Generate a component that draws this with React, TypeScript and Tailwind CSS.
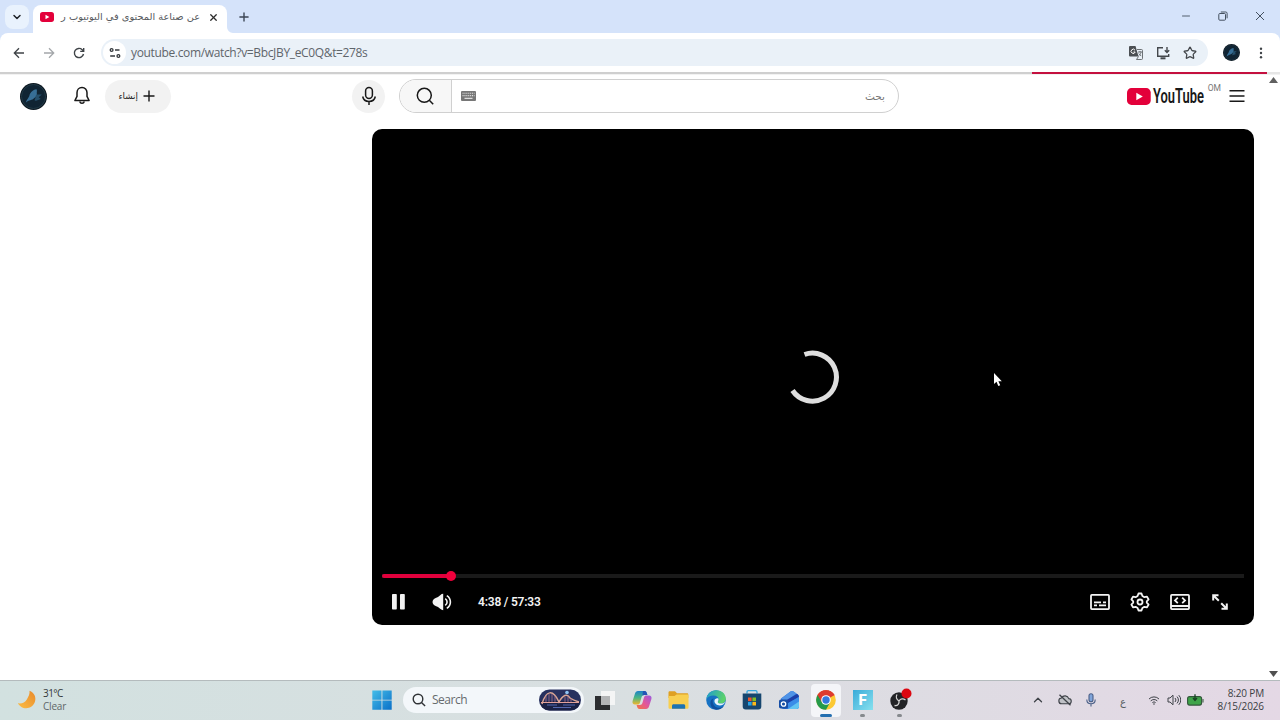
import type { ReactNode } from "react";
import { clsx } from "clsx";
import { ChevronDown, ChevronUp, Plus, X, Minus, Star } from "lucide-react";

interface SlotProps {
    className?: string;
    children: ReactNode;
}

function Slot({ className, children }: SlotProps) {
    return <div className={clsx("flex shrink-0 items-center justify-center", className)}>{children}</div>;
}

function YouTubeBadge({ className }: { className: string }) {
    return (
        <svg viewBox="0 0 24 17" className={className}>
            <rect width="24" height="17" rx="4.5" fill="#e3003a" />
            <path d="M9.4 4.8v7.4l6.6-3.7z" fill="#fff" />
        </svg>
    );
}

function Avatar({ className }: { className: string }) {
    return (
        <svg viewBox="0 0 26 26" className={className}>
            <circle cx="13" cy="13" r="13" fill="#0c1720" />
            <circle cx="13" cy="13" r="11.6" fill="#102433" stroke="#26404c" strokeWidth=".8" />
            <path d="M5.500 19c.8-3.500 3.500-5 4-8.500 1.500-2.500 4.500-4.500 6.500-4.500.8 1.700-.2 3.500.3 4.500.7 1.700-1.300 2.800-2.500 4-2 2.500-5.500 1.500-8.300 4.500z" fill="#376f97" />
            <path d="M15.500 11l5.500 0-3 2.800 2 1.500-4.500 1.700c-1 .5-2-.5-1-1.500z" fill="#25506d" />
        </svg>
    );
}

/* Tab strip */
function TabStrip() {
    return (
        <div className="flex h-[33px] items-start bg-[#d5e3fa] pt-[5px]">
            <div className="ml-[5px] flex size-6 items-center justify-center rounded-lg bg-[#e9f2fd]">
                <ChevronDown className="size-3 text-[#1f2328]" strokeWidth={3} />
            </div>
            <div className="relative ml-1 flex h-7 w-[194px] items-center rounded-t-lg bg-white pb-[4px] pl-[7px]">
                <YouTubeBadge className="h-[10px] w-[14px]" />
                <div
                    dir="rtl"
                    className="ml-2 w-[138px] font-['DejaVu_Sans',sans-serif] text-[9.8px] leading-4 whitespace-nowrap text-[#55585c]"
                >
                    عن صناعة المحتوى في اليوتيوب ر
                </div>
                <X className="ml-[8px] size-[11px] text-[#2c2c2c]" strokeWidth={2.800} />
                <svg viewBox="0 0 6 6" className="absolute bottom-0 left-full size-1.5">
                    <path d="M0 0a6 6 0 0 0 6 6H0z" fill="#fff" />
                </svg>
            </div>
            <Slot className="h-[23px] w-[34px]">
                <Plus className="size-3.5 text-[#3c4654]" strokeWidth={2.4} />
            </Slot>
            <div className="ml-auto flex h-[22px] pr-[2px] text-[#44505f]">
                <Slot className="w-[37px]">
                    <Minus className="size-3" strokeWidth={1.8} />
                </Slot>
                <Slot className="w-[37px]">
                    <svg viewBox="0 0 10 10" className="size-[10px]" fill="none" stroke="currentColor" strokeWidth="1">
                        <rect x=".8" y="2.500" width="6.700" height="6.700" rx="1" />
                        <path d="M2.800 1h5c.8 0 1.300.5 1.300 1.300v5" />
                    </svg>
                </Slot>
                <Slot className="w-[37px]">
                    <svg viewBox="0 0 10 10" className="size-[10px]" fill="none" stroke="currentColor" strokeWidth="1">
                        <path d="M1 1l8 8M9 1L1 9" />
                    </svg>
                </Slot>
            </div>
        </div>
    );
}

/* Address bar row */
function Toolbar() {
    return (
        <div className="bg-[#d5e3fa]">
            <div className="flex h-[39px] items-center rounded-t-lg bg-white pl-1">
                <Slot className="w-[30px]">
                    <svg viewBox="0 0 12 12" className="size-3" fill="none" stroke="#3f4347" strokeWidth="1.3">
                        <path d="M11 6H1.500M6 1.300L1.300 6 6 10.700" />
                    </svg>
                </Slot>
                <Slot className="w-[30px]">
                    <svg viewBox="0 0 12 12" className="size-3" fill="none" stroke="#a4a7aa" strokeWidth="1.3">
                        <path d="M1 6h9.500M6 1.300L10.700 6 6 10.700" />
                    </svg>
                </Slot>
                <Slot className="w-[30px]">
                    <svg viewBox="0 0 12 12" className="size-3" fill="none" stroke="#3f4347" strokeWidth="1.400">
                        <path d="M10.500 7A4.600 4.600 0 1 1 9.200 2.700L10.400 4" />
                        <path d="M10.700.9v3.500H7.200" />
                    </svg>
                </Slot>
                <div className="ml-[7px] flex h-[27px] w-[1107px] items-center rounded-full bg-[#eaf1f8] pr-[5px] pl-[2px]">
                    <Slot className="size-[23px] rounded-full bg-white">
                        <svg viewBox="0 0 12 12" className="size-3" fill="none" stroke="#33373b" strokeWidth="1.300">
                            <circle cx="2.600" cy="3" r="1.400" />
                            <path d="M6 3h4.500M1.200 9H6" />
                            <circle cx="9.400" cy="9" r="1.400" />
                        </svg>
                    </Slot>
                    <span className="ml-[5px] pt-px font-['Open_Sans',sans-serif] text-[12px] tracking-[-0.35px] text-[#5f656b]">
                        youtube.com/watch?v=BbcJBY_eC0Q&amp;t=278s
                    </span>
                    <div className="ml-auto flex text-[#44484c]">
                        <Slot className="w-[27px]">
                            <svg viewBox="0 0 14 14" className="size-3.5">
                                <path d="M1 0h5.500l3 10.500H1a1 1 0 0 1-1-1V1a1 1 0 0 1 1-1z" fill="#4b4f53" />
                                <path d="M6 4.200A2.100 2.100 0 1 0 6.200 6H4.500" fill="none" stroke="#fff" strokeWidth="1" />
                                <path d="M8 3.500h4.500a1 1 0 0 1 1 1V12.500a1 1 0 0 1-1 1H7.500L9.500 10.500M9 6h4M11 5v1M12 6.300c-.4 1.700-1.400 2.800-2.400 3.500M9.800 7.500l2.400 2.600" fill="none" stroke="#5f6367" strokeWidth=".9" />
                            </svg>
                        </Slot>
                        <Slot className="w-[27px]">
                            <svg viewBox="0 0 14 14" className="size-3.5" fill="none" stroke="currentColor" strokeWidth="1.400">
                                <path d="M7 1.700H1.700v8.600h11V8M11 1v5M8.800 4.200L11 6.400l2.200-2.200" />
                                <path d="M4.500 12.300h5" strokeWidth="2" />
                            </svg>
                        </Slot>
                        <Slot className="w-[27px]">
                            <Star className="size-[14px]" strokeWidth={2.200} />
                        </Slot>
                    </div>
                </div>
                <Slot className="ml-[14px] w-[18px]">
                    <Avatar className="size-[17px]" />
                </Slot>
                <Slot className="ml-[14px] w-[14px]">
                    <svg viewBox="0 0 4 12" className="h-3 w-1" fill="#3f4347">
                        <circle cx="2" cy="1.700" r="1.200" />
                        <circle cx="2" cy="6" r="1.200" />
                        <circle cx="2" cy="10.300" r="1.200" />
                    </svg>
                </Slot>
            </div>
        </div>
    );
}

function Masthead() {
    return (
        <header className="flex h-[42px] items-center">
            <Avatar className="ml-5 size-[27px]" />
            <Slot className="ml-[25px] w-5">
                <svg viewBox="0 0 20 20" className="size-5" fill="none" stroke="#181818" strokeWidth="1.500" strokeLinejoin="round">
                    <path d="M10 1.600c-3 0-5 2.300-5 5.200v3.600L2.900 14.500h14.200L15 10.400V6.800c0-2.900-2-5.200-5-5.200z" />
                    <path d="M7.700 15.500a2.400 2.400 0 0 0 4.600 0" />
                </svg>
            </Slot>
            <div className="ml-[13px] flex h-[33px] w-[66px] items-center rounded-full bg-[#f2f2f2] pl-[13px]">
                <span dir="rtl" className="w-[20px] font-['DejaVu_Sans',sans-serif] text-[8.800px] leading-4 whitespace-nowrap text-[#222]">
                    إنشاء
                </span>
                <svg viewBox="0 0 12 12" className="ml-[5px] size-3" stroke="#181818" strokeWidth="1.400">
                    <path d="M6 .5v11M.5 6h11" />
                </svg>
            </div>
            <Slot className="ml-[181px] size-[33px] rounded-full bg-[#f2f2f2]">
                <svg viewBox="0 0 16 20" className="h-5 w-4" fill="none" stroke="#181818" strokeWidth="1.500">
                    <rect x="4.600" y="1.500" width="6.800" height="11" rx="3.400" />
                    <path d="M1.700 10.500c.6 3.200 3.200 5 6.300 5s5.700-1.800 6.300-5M8 15.500V19" />
                </svg>
            </Slot>
            <div className="ml-[14px] flex h-[34px] w-[500px] items-center overflow-hidden rounded-full border border-[#d0d0d0] bg-white">
                <Slot className="h-full w-[52px] border-r border-[#d0d0d0] bg-[#f7f7f7]">
                    <svg viewBox="0 0 18 18" className="mr-px size-[18px]" fill="none" stroke="#181818" strokeWidth="1.500">
                        <circle cx="8.300" cy="8.300" r="7" />
                        <path d="M13.300 13.300L17.200 17.200" />
                    </svg>
                </Slot>
                <svg viewBox="0 0 15 10" className="ml-[9px] h-[10px] w-[15px]">
                    <rect width="15" height="10" rx="1" fill="#777" />
                    <path d="M1.500 2.300h12M1.500 4.600h12" stroke="#ddd" strokeWidth="1.100" strokeDasharray="1.100 .8" />
                    <path d="M3.500 7.400h8" stroke="#ddd" strokeWidth="1.100" />
                </svg>
                <span dir="rtl" className="mr-[13px] ml-auto font-['DejaVu_Sans',sans-serif] text-[10.500px] leading-4 text-[#777]">
                    بحث
                </span>
            </div>
            <div className="ml-[228px] flex w-[94px] items-center">
                <YouTubeBadge className="h-[17px] w-6" />
                <svg viewBox="0 0 53 24" className="ml-px h-6 w-[53px] overflow-visible">
                    <text
                        x="1"
                        y="19.300"
                        textLength="51"
                        lengthAdjust="spacingAndGlyphs"
                        fontFamily="Roboto, sans-serif"
                        fontSize="19.500"
                        fontWeight="600"
                        fill="#181818"
                    >
                        YouTube
                    </text>
                </svg>
                <span className="mb-4 ml-[3px] font-['Roboto',sans-serif] text-[8.500px] leading-3 text-[#777]">OM</span>
            </div>
            <svg viewBox="0 0 16 14" className="ml-[8px] h-3.5 w-4" stroke="#181818" strokeWidth="1.400">
                <path d="M.5 1.700h15M.5 7h15M.5 12.300h15" />
            </svg>
        </header>
    );
}

function Player() {
    return (
        <div className="relative mt-3 ml-[372px] flex h-[496px] w-[882px] flex-col rounded-[10px] bg-black px-[10px]">
            <div className="flex flex-1 items-end justify-center">
                <svg viewBox="-27 -27 54 54" className="mb-[170px] size-[54px]" fill="none" stroke="#dedede" strokeWidth="5">
                    <path d="M-8.500-22.500A24 24 0 1 1-20.500 13.500" />
                </svg>
            </div>
            <div className="relative h-1 bg-[#1a1a1a]">
                <div className="h-full w-[70px] rounded-l-sm bg-[#e0003c]" />
                <div className="absolute top-[-3px] left-[64px] size-[10px] rounded-full bg-[#f0003c]" />
            </div>
            <div className="flex h-[47px] items-center text-[#f3f3f3]">
                <svg viewBox="0 0 13 16" className="ml-[10px] h-4 w-[13px]" fill="currentColor">
                    <rect width="4.800" height="15.500" rx=".8" />
                    <rect x="8" width="4.800" height="15.500" rx=".8" />
                </svg>
                <svg viewBox="0 0 20 18" className="ml-[27px] h-[18px] w-5" fill="currentColor">
                    <path d="M11.200.8v16.400c-1 0-2-.5-3-1.400L6 14C2.500 13 .5 11.300.5 9S2.500 5 6 4l2.200-1.800c1-.9 2-1.400 3-1.400z" />
                    <path d="M13.200 5.600a4 4 0 0 1 0 6.800M14.800 2.600a7.500 7.500 0 0 1 0 12.800" fill="none" stroke="currentColor" strokeWidth="1.600" />
                </svg>
                <span className="ml-[26px] font-['Roboto',sans-serif] text-[12px] font-semibold tracking-[-0.2px]">4:38 / 57:33</span>
                <div className="mr-[4px] ml-auto flex">
                    <Slot className="w-10">
                        <svg viewBox="0 0 20 16" className="h-4 w-5" fill="none" stroke="currentColor" strokeWidth="1.800">
                            <rect x="1" y=".9" width="18" height="14.200" rx=".8" />
                            <path d="M4 8.300h7M13 8.300h3M4 11.400h3M9 11.400h7" strokeWidth="1.700" />
                        </svg>
                    </Slot>
                    <Slot className="w-10">
                        <svg viewBox="0 0 20 20" className="size-5" fill="none" stroke="currentColor" strokeWidth="1.800" strokeLinejoin="round">
                            <path d="M8.500 1.500h3l.9 2.500 2 1.200 2.600-.5 1.600 2.700-1.800 1.900v1.400l1.800 1.900-1.600 2.700-2.600-.5-2 1.200-.9 2.500h-3l-.9-2.500-2-1.200-2.600.5-1.600-2.700 1.800-1.900V9.300L1.400 7.400 3 4.700l2.600.5 2-1.200z" />
                            <circle cx="10" cy="10" r="2.500" />
                        </svg>
                    </Slot>
                    <Slot className="w-10">
                        <svg viewBox="0 0 20 16" className="h-4 w-5" fill="none" stroke="currentColor" strokeWidth="1.800">
                            <rect x="1" y=".9" width="18" height="14.200" rx=".8" />
                            <path d="M1 12h18M7.800 3.700L5 6.400l2.800 2.700M12.200 3.700L15 6.400l-2.800 2.700" />
                        </svg>
                    </Slot>
                    <Slot className="w-10">
                        <svg viewBox="0 0 16 16" className="size-4" fill="none" stroke="currentColor" strokeWidth="2">
                            <path d="M1.200 6.500V1.200h5.300M1.200 1.200l5.600 5.600M14.800 9.500v5.300H9.500M14.800 14.800L9.200 9.200" />
                        </svg>
                    </Slot>
                </div>
            </div>
            {/* mouse pointer */}
            <svg viewBox="0 0 10 15" className="absolute top-[243px] left-[621px] h-[15px] w-[10px]">
                <path d="M1 1v11l2.500-2.300L5.300 14l1.900-.8-1.800-4h3.400z" fill="#fff" />
            </svg>
        </div>
    );
}

const Copilot = () => (
    <svg viewBox="0 0 20 20" className="size-5">
        <defs>
            <linearGradient id="cpA" x1="0" y1="0" x2="0" y2="1">
                <stop offset="0" stopColor="#1c82c9" />
                <stop offset=".5" stopColor="#4bb883" />
                <stop offset="1" stopColor="#f2b52c" />
            </linearGradient>
            <linearGradient id="cpB" x1="1" y1="0" x2="0" y2="1">
                <stop offset="0" stopColor="#9a5be0" />
                <stop offset=".5" stopColor="#e2559b" />
                <stop offset="1" stopColor="#f4763c" />
            </linearGradient>
        </defs>
        <path d="M6 1h6.500c1.300 0 1.900.9 2.300 2l.6 2h-3.200c-1.500 0-2.200.8-2.600 2L8 12.500c-.5 1.500-1.200 2-2.500 2H3c-2 0-2.900-1.500-2.400-3.500L3 3.500C3.500 1.900 4.400 1 6 1z" fill="url(#cpA)" />
        <path d="M14 19H7.500c-1.300 0-1.900-.9-2.300-2l-.6-2h3.200c1.500 0 2.200-.8 2.600-2L12 7.500c.5-1.500 1.200-2 2.500-2H17c2 0 2.900 1.500 2.400 3.500L17 16.500c-.5 1.600-1.400 2.500-3 2.500z" fill="url(#cpB)" />
        <path d="M12.500 1c1.300 0 1.900.9 2.300 2l.6 2h-3.200c-.8 0-1.400.3-1.800.7L11 1z" fill="#2455b5" />
    </svg>
);

const Explorer = () => (
    <svg viewBox="0 0 21 20" className="h-5 w-[21px]">
        <path d="M.5 2.500c0-.8.500-1.300 1.300-1.300H7l2 2h10c.8 0 1.300.5 1.300 1.300V8H.5z" fill="#dfa022" />
        <path d="M.5 6h6l2-1.500h11c.7 0 1 .4 1 1v12c0 .8-.5 1.300-1.300 1.300H1.800c-.8 0-1.300-.5-1.300-1.300z" fill="#f8cf50" />
        <path d="M4 18.800v-3c0-1 .6-1.600 1.600-1.600h10c1 0 1.600.6 1.600 1.600v3z" fill="#1c73b3" />
    </svg>
);

const Edge = () => (
    <svg viewBox="0 0 20 20" className="size-5">
        <defs>
            <linearGradient id="edgeTop" x1="0" y1="0" x2="1" y2=".3">
                <stop offset="0" stopColor="#1d9bd3" />
                <stop offset="1" stopColor="#5bd26a" />
            </linearGradient>
        </defs>
        <circle cx="10" cy="10" r="9.800" fill="#1672c4" />
        <path d="M.3 9.500C.8 4 5 .2 10.200.2c5.800 0 9.600 4 9.600 8.500 0 3-2.300 4.800-5 4.800-1.800 0-3.200-.7-3-1.600.3-.8.9-1.200.9-2.500 0-1.900-2-3.900-5.200-3.900C4 5.500 1.500 7 .3 9.500z" fill="url(#edgeTop)" />
        <path d="M7.500 8.500c-1.500 2-1 5.500 1.300 7.700 2.200 2 6 2.200 9.200-.5-1.500 2.600-4.300 4.100-7.500 4.100C5.500 19 4 15 4.500 12c.2-1.600 1.500-3 3-3.500z" fill="#0f4f9e" />
        <path d="M12.300 8.500c.8 1.400-.5 2.500-.5 3.400 0 1 1.300 1.700 3.200 1.700 1.600 0 3.200-.6 4.200-1.900-.5 2.300-3 3.700-5.400 3.700-3.500 0-5.800-2.300-5.300-4.800.3-1.700 2-2.700 3.800-2.100z" fill="#e8f5fb" />
    </svg>
);

const Store = () => (
    <svg viewBox="0 0 20 20" className="size-5">
        <path d="M5 3.500V2c0-.9.500-1.300 1.300-1.300h7.400c.8 0 1.300.4 1.300 1.300v1.500" fill="none" stroke="#35a7dd" strokeWidth="1.300" />
        <path d="M.7 3.500h18.600v13c0 2-1 3-3 3H3.700c-2 0-3-1-3-3z" fill="#16466f" />
        <path d="M6 7.500h3.600v3.600H6z" fill="#f0532b" />
        <path d="M10.400 7.500H14v3.600h-3.600z" fill="#82bd22" />
        <path d="M6 11.900h3.600v3.600H6z" fill="#27a3e8" />
        <path d="M10.400 11.900H14v3.600h-3.600z" fill="#fdb91a" />
    </svg>
);

const Outlook = () => (
    <svg viewBox="0 0 20 20" className="size-5">
        <path d="M2 8.500L11.500 1.500c1-.6 2-.6 3 0l4 2.700c1 .6 1.400 1.500 1.400 2.600v9.700c0 1.500-1 2.500-2.500 2.500H5c-1.800 0-3-1-3-2.800z" fill="#2b6fd6" />
        <path d="M1.500 9l10-7.500c1-.6 2-.6 3 0l3 2L7 11z" fill="#4f93e6" />
        <path d="M5 11.500L18 4c1.200.7 1.900 1.700 1.900 2.800L9 13.500z" fill="#1c3fa8" />
        <path d="M9 18.900V13L20 7v9.500c0 1.500-1 2.400-2.500 2.400z" fill="#3a8ce8" />
        <path d="M9 18.900L20 11.500v5c0 1.500-1 2.400-2.500 2.400z" fill="#62c4f2" />
        <rect y="9.500" width="9" height="9" rx="1.800" fill="#164ea6" />
        <circle cx="4.500" cy="14" r="2.200" fill="none" stroke="#fff" strokeWidth="1.300" />
    </svg>
);

const Chrome = () => (
    <svg viewBox="0 0 20 20" className="size-5">
        <circle cx="10" cy="10" r="9.800" fill="#fcc934" />
        <path d="M10 10L1.500 5.100A9.800 9.800 0 0 1 18.500 5.100z" fill="#dd3b30" />
        <path d="M1.500 5.100A9.800 9.800 0 0 0 10 19.800L14 12.400 10 10z" fill="#259a4b" />
        <path d="M10 5.300h8.600l-.1-.2A9.800 9.800 0 0 0 1.500 5.100L6 12.500z" fill="#dd3b30" />
        <circle cx="10" cy="10" r="4.800" fill="#fff" />
        <circle cx="10" cy="10" r="3.700" fill="#3478df" />
    </svg>
);

const TaskView = () => (
    <svg viewBox="0 0 20 19" className="h-[19px] w-5">
        <rect x="6" y="0" width="14" height="14" fill="#f4f5f5" />
        <rect x="0" y="5" width="15" height="14" fill="#2b2d2f" />
        <rect x="6" y="5" width="9" height="9" fill="#b3b5b6" />
    </svg>
);

const Fortnite = () => (
    <div className="flex size-5 items-center justify-center bg-linear-to-br from-[#38abd9] to-[#86e1ee] font-['Roboto',sans-serif] text-[15px] leading-5 font-black text-white">
        F
    </div>
);

const Obs = () => (
    <svg viewBox="0 0 24 22" className="mb-[3px] ml-[5px] h-[22px] w-6">
        <circle cx="9" cy="13" r="8.700" fill="#222326" />
        <path d="M7 6.500c-1.500 2.500-.5 5 2 6.500M15.500 12c-2.300-1.700-5-1.400-6.500 1M4.500 17.500c3 .7 5-1.500 4.500-4.500" fill="none" stroke="#d5d5d5" strokeWidth="1.300" />
        <circle cx="16.500" cy="5.500" r="5" fill="#dc0711" />
    </svg>
);

const apps = [
    { name: "taskview", icon: <TaskView />, mark: "" },
    { name: "copilot", icon: <Copilot />, mark: "" },
    { name: "explorer", icon: <Explorer />, mark: "" },
    { name: "edge", icon: <Edge />, mark: "" },
    { name: "store", icon: <Store />, mark: "" },
    { name: "outlook", icon: <Outlook />, mark: "" },
    { name: "chrome", icon: <Chrome />, mark: "w-3 h-[3px] bg-[#246fb0]" },
    { name: "fortnite", icon: <Fortnite />, mark: "w-[5px] h-[3px] bg-[#85898d]" },
    { name: "obs", icon: <Obs />, mark: "w-[5px] h-[3px] bg-[#85898d]" },
];

function Taskbar() {
    return (
        <footer className="flex h-10 items-center border-t border-[#b4bbbd] bg-linear-to-r from-[#d2e1e0] via-[#d9dfe1] to-[#e4d8e5] pb-px font-['Open_Sans',sans-serif]">
            {/* Weather */}
            <svg viewBox="0 0 20 20" className="ml-[17px] size-5">
                <defs>
                    <linearGradient id="moon" x1="1" y1="0" x2="0" y2="1">
                        <stop offset="0" stopColor="#e98a2b" />
                        <stop offset="1" stopColor="#fbbd45" />
                    </linearGradient>
                </defs>
                <path d="M12.500.8c4.500 1.700 6.900 6.200 5.500 10.800-1.500 5-6.700 7.800-11.500 6.300C4 17.200 2 15.500.9 13.300c4 .6 7-.7 8.900-3.900 1.700-2.800 3.200-5.400 2.700-8.600z" fill="url(#moon)" />
            </svg>
            <div className="ml-[6px] w-[60px] text-[10px] leading-[13px] text-[#33383a]">
                <p className="tracking-[-0.55px]">31°C</p>
                <p className="tracking-[-0.2px] text-[#5f6668]">Clear</p>
            </div>

            {/* Start and search */}
            <svg viewBox="0 0 20 20" className="ml-[269px] size-5">
                <defs>
                    <linearGradient id="win" x1="0" y1="0" x2="1" y2="1">
                        <stop offset="0" stopColor="#45bde8" />
                        <stop offset="1" stopColor="#0a70c8" />
                    </linearGradient>
                </defs>
                <path d="M.3.500h9.200v9.200H.3zM10.400.500h9.300v9.200h-9.300zM.3 10.600h9.200v9.100H.3zM10.400 10.600h9.300v9.100h-9.300z" fill="url(#win)" />
            </svg>
            <div className="ml-[11px] flex h-[26px] w-[181px] items-center rounded-full bg-[#f3f7fa] pr-[3px] pl-[9px]">
                <svg viewBox="0 0 14 14" className="size-3.5" fill="none" stroke="#303336" strokeWidth="1.400">
                    <circle cx="6" cy="6" r="4.800" />
                    <path d="M9.500 9.500l3.600 3.600" />
                </svg>
                <span className="ml-[6px] text-[12px] tracking-[-0.5px] text-[#666b6e]">Search</span>
                <svg viewBox="0 0 42 22" className="ml-auto h-[22px] w-[42px]">
                    <rect width="42" height="21" y=".5" rx="10.500" fill="#28315f" />
                    <path d="M1 12h40c0 5.500-4.500 9.500-10 9.500H11C5.500 21.500 1 17.500 1 12z" fill="#1a2145" />
                    <path d="M3 15C7 1 14 0 20 13c4-7 8-9 11-4 3 2 6 3 9 4" fill="none" stroke="#d8a494" strokeWidth="1.500" />
                    <path d="M7 7v6M10 5v8M13 5v8M16 7v6M26 8v5M29 7v6M32 9v4" stroke="#b77991" strokeWidth=".7" />
                    <path d="M2 13.500h38" stroke="#e2a19a" strokeWidth="1" />
                    <path d="M8 16h10M14 18.500h18M24 16h12" stroke="#5368ad" strokeWidth="1" />
                    <circle cx="28" cy="3.500" r="1.800" fill="#8fc5f4" />
                </svg>
            </div>

            {/* Pinned apps */}
            <div className="ml-[3px] flex">
                {apps.map((app) => (
                    <div key={app.name} className="relative flex h-[33px] w-[36.750px] items-center justify-center">
                        {app.name === "chrome" && <div className="absolute inset-x-[3px] inset-y-0 rounded bg-[#f4f5f8]" />}
                        <div className="relative">{app.icon}</div>
                        {app.mark && <div className={clsx("absolute bottom-0 rounded-full", app.mark)} />}
                    </div>
                ))}
            </div>

            {/* Tray */}
            <div className="ml-auto flex items-center text-[#3e4248]">
                <Slot className="w-[27px]">
                    <ChevronUp className="size-[14px]" strokeWidth={2.200} />
                </Slot>
                <Slot className="w-[27px]">
                    <svg viewBox="0 0 14 12" className="h-3 w-3.5" fill="none" stroke="currentColor" strokeWidth="1.100">
                        <path d="M4 9.800h6.500a2.600 2.600 0 0 0 .3-5.200A4 4 0 0 0 3.500 4 2.900 2.900 0 0 0 4 9.800z" fill="#bfc1c6" />
                        <path d="M1.500.8l11 10.500" strokeWidth="1.300" />
                    </svg>
                </Slot>
                <Slot className="w-[26px]">
                    <svg viewBox="0 0 10 14" className="h-3.5 w-[10px]" fill="none" stroke="#4a5f87" strokeWidth="1.100">
                        <rect x="3" y=".8" width="4" height="8" rx="2" fill="#7fa4da" />
                        <path d="M.8 6.500c0 2.700 1.800 4.300 4.200 4.300s4.200-1.600 4.200-4.300M5 10.800v2.700" />
                    </svg>
                </Slot>
                <Slot className="ml-[12px] w-[14px]">
                    <span className="pt-[3px] font-['DejaVu_Sans',sans-serif] text-[10px] leading-4 text-[#555a60]">ع</span>
                </Slot>
                <Slot className="ml-[14px] w-5">
                    <svg viewBox="0 0 12 10" className="h-[10px] w-3" fill="none" stroke="currentColor" strokeWidth="1">
                        <path d="M1 4a7 7 0 0 1 10 0M2.700 5.900a4.700 4.700 0 0 1 6.600 0M4.400 7.600a2.300 2.300 0 0 1 3.200 0" />
                        <circle cx="6" cy="9" r=".8" fill="currentColor" stroke="none" />
                    </svg>
                </Slot>
                <Slot className="w-5">
                    <svg viewBox="0 0 14 12" className="h-3 w-3.5" fill="none" stroke="currentColor" strokeWidth="1">
                        <path d="M1 4h2l3-2.800v9.600L3 8H1zM8 4a2.800 2.800 0 0 1 0 4M10 2.600a4.800 4.800 0 0 1 0 6.800M11.800 1.200a6.800 6.800 0 0 1 0 9.600" />
                    </svg>
                </Slot>
                <Slot className="w-[23px]">
                    <svg viewBox="0 0 17 12" className="h-3 w-[17px]">
                        <rect x=".6" y="2.600" width="14" height="8.500" rx="2" fill="#3fa449" stroke="#32553a" strokeWidth="1.100" />
                        <path d="M15.500 5v3.600h1V5z" fill="#32553a" />
                        <path d="M8 .2v5M6 4l2 2.500L10 4" fill="none" stroke="#174022" strokeWidth="1.300" />
                    </svg>
                </Slot>
                <div className="mr-4 w-[57px] text-right text-[10px] leading-[13px] whitespace-nowrap text-[#3a3d42]">
                    <p className="tracking-[-0.15px]">8:20 PM</p>
                    <p className="tracking-[-0.1px]">8/15/2026</p>
                </div>
            </div>
        </footer>
    );
}

export default function App() {
    return (
        <div className="flex h-[720px] w-[1280px] flex-col overflow-hidden bg-white">
            <TabStrip />
            <Toolbar />
            {/* page loading bar */}
            <div className="flex h-[3px] border-b border-[#f2f2f2] bg-[#cfcfcf]">
                <div className="ml-[1032px] h-[2px] w-[235px] bg-[#c4103f]" />
                <div className="h-[2px] flex-1 bg-[#e6e6e6]" />
            </div>
            <div className="flex flex-1">
                <main className="w-[1267px]">
                    <Masthead />
                    <Player />
                </main>
                <div className="flex w-[13px] flex-col items-center justify-between py-[2px]">
                    <svg viewBox="0 0 9 6" className="h-1.5 w-[9px]">
                        <path d="M4.500 0L9 6H0z" fill="#606060" />
                    </svg>
                    <svg viewBox="0 0 9 6" className="mb-[1px] h-1.5 w-[9px]">
                        <path d="M4.500 6L9 0H0z" fill="#505050" />
                    </svg>
                </div>
            </div>
            <Taskbar />
        </div>
    );
}
